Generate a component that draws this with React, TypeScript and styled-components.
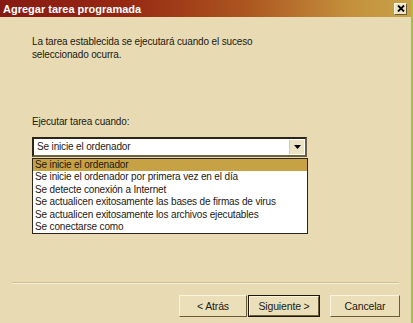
import styled, { createGlobalStyle } from "styled-components";

const Global = createGlobalStyle`
  html, body {
    margin: 0;
    padding: 0;
    background: #e8dab2;
  }
  body {
    font-family: "Liberation Sans", Arial, sans-serif;
  }
`;

const Window = styled.div`
  width: 411px;
  height: 323px;
  border-right: 2px solid #a2c23a;
  background: #e8dab2;
  display: flex;
  flex-direction: column;
  overflow: hidden;
  color: #1c1a14;
  font-size: 10px;
  letter-spacing: -0.15px;
`;

const TitleBar = styled.div`
  height: 17px;
  flex-shrink: 0;
  display: flex;
  align-items: center;
  justify-content: space-between;
  padding: 0 4px 0 3px;
  background: linear-gradient(90deg, #861a12 0%, #962812 30%, #ac5620 60%, #c4903c 85%, #c8a24a 100%);
`;

const Title = styled.span`
  color: #ffffff;
  font-weight: bold;
  font-size: 11px;
  letter-spacing: 0;
`;

const CloseButton = styled.div`
  width: 11px;
  height: 10px;
  background: #efe6c8;
  border: 1px solid #fff8e0;
  border-right-color: #6a5a30;
  border-bottom-color: #6a5a30;
  display: flex;
  align-items: center;
  justify-content: center;
`;

const Content = styled.div`
  flex: 1;
  display: flex;
  flex-direction: column;
  padding: 18px 0 0 32px;
`;

const Paragraph = styled.p<{ $gap?: number }>`
  margin: 0 0 ${(p) => p.$gap ?? 0}px 0;
  line-height: 13px;
  width: 260px;
`;

const Combo = styled.div`
  width: 268px;
  height: 16px;
  margin-top: 9px;
  background: #ffffff;
  border: 2px solid #2c2618;
  border-right-color: #6c6040;
  border-bottom-color: #6c6040;
  display: flex;
  align-items: center;
  justify-content: space-between;
  padding-left: 3px;
`;

const ComboText = styled.span`
  line-height: 14px;
`;

const ArrowButton = styled.div`
  width: 14px;
  height: 14px;
  margin-right: 1px;
  background: #ece2c4;
  border-left: 1px solid #d8cca8;
  display: flex;
  align-items: center;
  justify-content: center;
`;

const List = styled.ul`
  list-style: none;
  margin: 1px 0 0 0;
  padding: 0;
  width: 274px;
  background: #ffffff;
  border: 1px solid #2c2618;
`;

const Item = styled.li<{ $selected?: boolean }>`
  height: 12.4px;
  line-height: 12.4px;
  padding-left: 2px;
  white-space: nowrap;
  background: ${(p) => (p.$selected ? "#c6a244" : "transparent")};
  color: #1c1a14;
`;

const Separator = styled.div`
  margin: auto 12px 0 12px;
  height: 0;
  border-top: 1px solid #cfc094;
  border-bottom: 1px solid #f6eed4;
`;

const ButtonRow = styled.div`
  display: flex;
  justify-content: flex-end;
  align-items: center;
  padding: 11px 11px 6px 0;
`;

const Button = styled.div<{ $default?: boolean; $gap?: number; $w?: number }>`
  width: ${(p) => p.$w ?? 66}px;
  height: ${(p) => (p.$default ? 18 : 20)}px;
  margin-left: ${(p) => p.$gap ?? 0}px;
  display: flex;
  align-items: center;
  justify-content: center;
  font-size: 10.5px;
  background: #ebdfb9;
  border: 1px solid #fbf4dc;
  border-right-color: #6a5c36;
  border-bottom-color: #6a5c36;
  box-shadow: ${(p) => (p.$default ? "0 0 0 1px #1c160c" : "none")};
`;

const items = [
  "Se inicie el ordenador",
  "Se inicie el ordenador por primera vez en el día",
  "Se detecte conexión a Internet",
  "Se actualicen exitosamente las bases de firmas de virus",
  "Se actualicen exitosamente los archivos ejecutables",
  "Se conectarse como",
];

export default function App() {
  return (
    <>
      <Global />
      <Window>
        <TitleBar>
          <Title>Agregar tarea programada</Title>
          <CloseButton>
            <svg width="8" height="7" viewBox="0 0 8 7">
              <path d="M1 0.5 L7 6.5 M7 0.5 L1 6.5" stroke="#000" strokeWidth="1.8" />
            </svg>
          </CloseButton>
        </TitleBar>
        <Content>
          <Paragraph $gap={54}>
            La tarea establecida se ejecutará cuando el suceso seleccionado ocurra.
          </Paragraph>
          <Paragraph>Ejecutar tarea cuando:</Paragraph>
          <Combo>
            <ComboText>Se inicie el ordenador</ComboText>
            <ArrowButton>
              <svg width="7" height="4" viewBox="0 0 7 4">
                <path d="M0 0 H7 L3.5 4 Z" fill="#000" />
              </svg>
            </ArrowButton>
          </Combo>
          <List>
            {items.map((t, i) => (
              <Item key={t} $selected={i === 0}>
                {t}
              </Item>
            ))}
          </List>
        </Content>
        <Separator />
        <ButtonRow>
          <Button>&lt; Atrás</Button>
          <Button $default $gap={2} $w={68}>
            Siguiente &gt;
          </Button>
          <Button $gap={11} $w={68}>
            Cancelar
          </Button>
        </ButtonRow>
      </Window>
    </>
  );
}
